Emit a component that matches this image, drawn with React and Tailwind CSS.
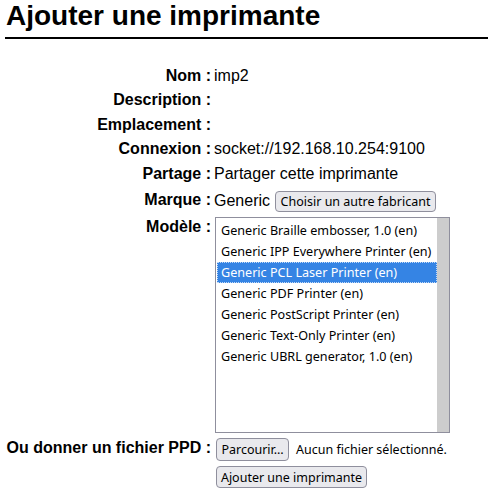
import React from "react";

const models = [
  "Generic Braille embosser, 1.0 (en)",
  "Generic IPP Everywhere Printer (en)",
  "Generic PCL Laser Printer (en)",
  "Generic PDF Printer (en)",
  "Generic PostScript Printer (en)",
  "Generic Text-Only Printer (en)",
  "Generic UBRL generator, 1.0 (en)",
];

const ui = "font-['Noto_Sans',sans-serif] text-[12.5px] leading-[17px]";
const btn =
  "bg-[#e9e9ed] border border-[#8f8f9d] rounded-[4px] text-black flex items-center justify-center " + ui;

function Row({ label, h, children, labelCls = "" }) {
  return (
    <div className={`flex ${h}`}>
      <div className={`w-[211px] shrink-0 text-right font-bold leading-[18px] ${labelCls}`}>{label}</div>
      <div className="pl-[3px] leading-[18px] flex-1">{children}</div>
    </div>
  );
}

export default function App() {
  return (
    <div className="w-[489px] h-[497px] bg-white text-black font-['Liberation_Sans',Arial,sans-serif] text-[16px] overflow-hidden">
      <h1 className="ml-[5px] mr-[1px] pl-[1px] text-[28px] font-bold leading-[32px] pb-[5px] border-b-2 border-black">
        Ajouter une imprimante
      </h1>
      <div className="mt-[28px] flex flex-col">
        <Row label="Nom :" h="h-[24px]">imp2</Row>
        <Row label="Description :" h="h-[25px]" />
        <Row label="Emplacement :" h="h-[24px]" />
        <Row label="Connexion :" h="h-[25px]">socket://192.168.10.254:9100</Row>
        <Row label="Partage :" h="h-[26px]">Partager cette imprimante</Row>
        <Row label="Marque :" h="h-[27px]">
          <div className="flex items-baseline gap-[5px]">
            <span className="leading-[18px]">Generic</span>
            <button className={`${btn} w-[161px] h-[21px]`}>Choisir un autre fabricant</button>
          </div>
        </Row>
        <Row label="Modèle :" h="h-[220px]">
          <div className="-mt-[1px] ml-[1px] w-[235px] h-[216px] border border-[#8f8f9d] flex bg-white">
            <div className="flex-1 pt-[2px] pl-[1px]">
              {models.map((m, i) => (
                <div
                  key={m}
                  className={`h-[21px] pl-[4px] leading-[21px] whitespace-nowrap font-['Noto_Sans',sans-serif] text-[12.6px] ${
                    i === 2
                      ? "bg-[#3584e4] text-white outline-1 outline-dotted outline-white/70 -outline-offset-1"
                      : "text-black"
                  }`}
                >
                  {m}
                </div>
              ))}
            </div>
            <div className="w-[12px] bg-[#cdcdcd]" />
          </div>
        </Row>
        <Row label="Ou donner un fichier PPD :" h="h-[23px]" labelCls="pt-[1px]">
          <div className="ml-[2px] flex items-center">
            <button className={`${btn} w-[73px] h-[23px]`}>Parcourir…</button>
            <span className={`ml-[7px] ${ui}`}>Aucun fichier sélectionné.</span>
          </div>
        </Row>
        <div className="flex mt-[5px]">
          <div className="w-[214px] shrink-0" />
          <button className={`${btn} ml-[2px] w-[151px] h-[22px]`}>Ajouter une imprimante</button>
        </div>
      </div>
    </div>
  );
}
